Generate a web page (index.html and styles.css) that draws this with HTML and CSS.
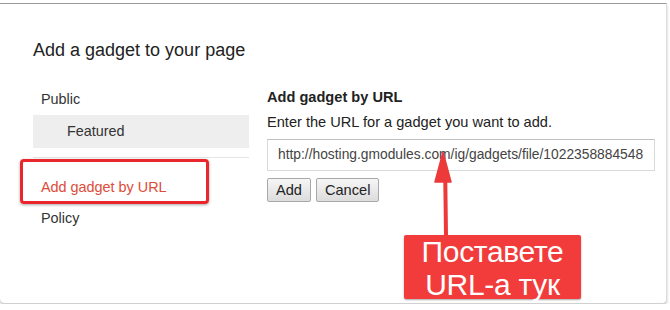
FILE: index.html
```html
<!DOCTYPE html>
<html>
<head>
<meta charset="utf-8">
<link rel="stylesheet" href="styles.css">
</head>
<body>
<div class="card">
  <h1 class="title">Add a gadget to your page</h1>
  <div class="content">
    <ul class="nav">
      <li class="nav-item">Public</li>
      <li class="nav-item sub selected">Featured</li>
      <li class="nav-sep"></li>
      <li class="nav-item active">Add gadget by URL</li>
      <li class="nav-item policy">Policy</li>
    </ul>
    <div class="panel">
      <div class="panel-title">Add gadget by URL</div>
      <div class="panel-desc">Enter the URL for a gadget you want to add.</div>
      <div class="url-input">http://hosting.gmodules.com/ig/gadgets/file/1022358884548</div>
      <div class="buttons">
        <button class="btn">Add</button>
        <button class="btn">Cancel</button>
      </div>
    </div>
  </div>
  <div class="highlight"></div>
  <svg class="arrow" width="30" height="90" viewBox="0 0 30 90">
    <path d="M13 83 L12.2 22" stroke="#ec3a3a" stroke-width="4" fill="none" stroke-linecap="round"/>
    <path d="M10 0 L2 30 L18 30 Z" fill="#ec3a3a" stroke="#ec3a3a" stroke-width="1.5" stroke-linejoin="round"/>
  </svg>
  <div class="callout">Поставете<br>URL-а тук</div>
</div>
</body>
</html>
```
FILE: styles.css
```css
html, body {
  margin: 0;
  padding: 0;
  background: #ffffff;
}
body {
  font-family: "Liberation Sans", Arial, sans-serif;
  color: #333;
}
.card {
  position: relative;
  box-sizing: border-box;
  width: 667px;
  height: 301px;
  margin-top: 3px;
  background: #fff;
  border-top: 1px solid #9a9a9a;
  border-right: 1px solid #dcdcdc;
  border-bottom: 1px solid #d0d0d0;
  border-radius: 0 0 5px 5px;
  box-shadow: 0 2px 3px rgba(0,0,0,0.22);
  padding: 35px 0 0 33px;
}
.title {
  margin: 0;
  font-size: 18px;
  font-weight: normal;
  line-height: 22px;
  color: #222;
}
.content {
  display: flex;
  margin-top: 22px;
}
.nav {
  list-style: none;
  margin: 0;
  padding: 0;
  width: 216px;
  font-size: 14.4px;
}
.nav-item {
  height: 32px;
  line-height: 32px;
  padding-left: 8px;
  color: #333;
}
.nav-item.sub {
  padding-left: 34px;
  height: 33px;
  line-height: 33px;
}
.nav-item.selected {
  background: #eeeeee;
}
.nav-sep {
  margin-top: 9px;
  height: 0;
  border-top: 1px solid #e5e5e5;
}
.nav-item.active {
  margin-top: 13px;
  color: #dd4b39;
}
.nav-item.policy {
  height: 31px;
  line-height: 31px;
}
.panel {
  margin-left: 18px;
  font-size: 14.6px;
}
.panel-title {
  font-weight: bold;
  line-height: 28px;
  color: #222;
}
.panel-desc {
  line-height: 22px;
  color: #222;
}
.url-input {
  box-sizing: border-box;
  margin-top: 6px;
  width: 388px;
  height: 32px;
  line-height: 30px;
  border: 1px solid #d9d9d9;
  border-top-color: #c0c0c0;
  padding: 0 10px;
  font-size: 13.8px;
  color: #444;
  white-space: nowrap;
  overflow: hidden;
}
.buttons {
  display: flex;
  gap: 5px;
  margin-top: 7px;
}
.btn {
  box-sizing: border-box;
  height: 24px;
  padding: 0 8px;
  font-family: "Liberation Sans", Arial, sans-serif;
  font-size: 14.6px;
  color: #222;
  background: linear-gradient(#f6f6f6, #dcdcdc);
  border: 1px solid #a9a9a9;
  border-radius: 2px;
}
.highlight {
  position: absolute;
  left: 20px;
  top: 155px;
  width: 189px;
  height: 45px;
  box-sizing: border-box;
  border: 3px solid #e8262b;
  border-radius: 4px;
  box-shadow: 0 1px 3px rgba(0,0,0,0.35);
}
.arrow {
  position: absolute;
  left: 433px;
  top: 148px;
}
.callout {
  position: absolute;
  left: 404px;
  top: 231px;
  width: 177px;
  height: 64px;
  background: #f23c3c;
  border-radius: 2px;
  box-shadow: 0 1px 2px rgba(0,0,0,0.35);
  color: #fff;
  font-size: 30px;
  line-height: 33px;
  text-align: center;
  letter-spacing: -0.3px;
}
```
